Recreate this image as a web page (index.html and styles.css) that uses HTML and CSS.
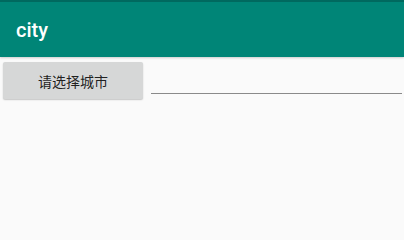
FILE: index.html
```html
<!DOCTYPE html>
<html>
<head>
<meta charset="utf-8">
<link rel="stylesheet" href="styles.css">
</head>
<body>
<div class="app">
  <header class="toolbar"><span class="title">city</span></header>
  <div class="row">
    <button class="btn">请选择城市</button>
    <div class="edit"><div class="underline"></div></div>
  </div>
</div>
</body>
</html>
```
FILE: styles.css
```css
html, body { margin: 0; padding: 0; }
body {
  width: 404px;
  height: 229px;
  background: #fafafa;
  font-family: Roboto, "Noto Sans CJK SC", sans-serif;
  overflow: hidden;
}
.app { display: flex; flex-direction: column; }
.toolbar {
  height: 55px;
  background: #008577;
  border-top: 2px solid #00695f;
  display: flex;
  align-items: center;
  padding-left: 16px;
  box-shadow: 0 1px 2px rgba(0,0,0,0.18);
}
.title {
  color: #fff;
  font-size: 20px;
  font-weight: 500;
}
.row {
  display: flex;
  align-items: flex-start;
  padding: 5px 0 0 3px;
}
.btn {
  width: 140px;
  height: 37px;
  background: #d6d7d7;
  border: none;
  border-radius: 2px;
  box-shadow: 0 1px 1.5px rgba(0,0,0,0.22);
  font-family: "Noto Sans CJK SC", sans-serif;
  font-size: 14px;
  color: rgba(0,0,0,0.87);
  padding: 0;
  margin: 0;
}
.edit {
  flex: 1;
  margin-left: 8px;
  margin-right: 2px;
  padding-top: 31px;
}
.underline {
  height: 1px;
  background: #8a8a8a;
}
```
